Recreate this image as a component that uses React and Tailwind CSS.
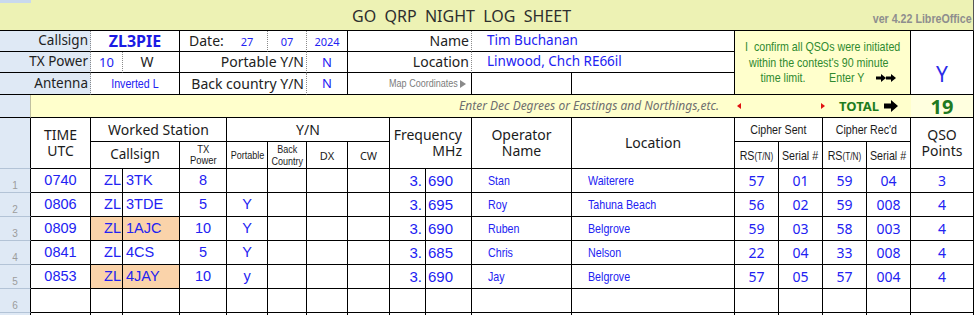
import React from "react";

const COLS =
  "grid grid-cols-[31px_60px_32px_57px_47px_41px_39px_41px_42px_36px_46px_100px_163px_44px_44px_44px_44px_63px]";
const T = "font-['Noto_Sans',sans-serif]";
const A = "font-['Liberation_Sans',Arial,sans-serif]";
const B = "border-r border-b border-r-black border-b-black";
const BD = "border-r border-b border-b-black border-r-[#8a8a8a] [border-right-style:dotted]";
const BLUE = "text-[#2222f2]";

function Nc({ children, className = "" }) {
  return (
    <span className={`inline-block whitespace-nowrap scale-x-[0.82] origin-center font-['Liberation_Sans',Arial,sans-serif] ${className}`}>
      {children}
    </span>
  );
}
function Nl({ children, className = "" }) {
  return (
    <span className={`inline-block whitespace-nowrap scale-x-[0.82] origin-left font-['Liberation_Sans',Arial,sans-serif] ${className}`}>
      {children}
    </span>
  );
}
function Nr({ children, className = "" }) {
  return (
    <span className={`inline-block whitespace-nowrap scale-x-[0.82] origin-right font-['Liberation_Sans',Arial,sans-serif] ${className}`}>
      {children}
    </span>
  );
}

const rows = [
  { n: "1", t: "0740", c: "3TK", w: "8", po: "", f1: "3.", f2: "690", op: "Stan", loc: "Waiterere", rs: "57", ss: "01", rr: "59", sr: "04", pts: "3", hl: false },
  { n: "2", t: "0806", c: "3TDE", w: "5", po: "Y", f1: "3.", f2: "695", op: "Roy", loc: "Tahuna Beach", rs: "56", ss: "02", rr: "59", sr: "008", pts: "4", hl: false },
  { n: "3", t: "0809", c: "1AJC", w: "10", po: "Y", f1: "3.", f2: "690", op: "Ruben", loc: "Belgrove", rs: "59", ss: "03", rr: "58", sr: "003", pts: "4", hl: true },
  { n: "4", t: "0841", c: "4CS", w: "5", po: "Y", f1: "3.", f2: "685", op: "Chris", loc: "Nelson", rs: "22", ss: "04", rr: "33", sr: "008", pts: "4", hl: false },
  { n: "5", t: "0853", c: "4JAY", w: "10", po: "y", f1: "3.", f2: "690", op: "Jay", loc: "Belgrove", rs: "57", ss: "05", rr: "57", sr: "004", pts: "4", hl: true },
  { n: "6", t: "", c: "", w: "", po: "", f1: "", f2: "", op: "", loc: "", rs: "", ss: "", rr: "", sr: "", pts: "", hl: false, zl: "" },
  { n: "", t: "", c: "", w: "", po: "", f1: "", f2: "", op: "", loc: "", rs: "", ss: "", rr: "", sr: "", pts: "", hl: false, zl: "" },
];

function Arrow({ className }) {
  return (
    <svg className={className} viewBox="0 0 14 12" width="14" height="12">
      <path d="M0 3.5 H7 V0 L14 6 L7 12 V8.5 H0 Z" fill="#000" />
    </svg>
  );
}

function SmallArrow() {
  return (
    <svg viewBox="0 0 10 8" width="10" height="8">
      <path d="M0 2.5 H5 V0 L10 4 L5 8 V5.5 H0 Z" fill="#000" />
    </svg>
  );
}

function DataRow({ r }) {
  const hl = r.hl ? "bg-[#fad3aa]" : "bg-white";
  const zl = r.zl === undefined ? "ZL" : r.zl;
  return (
    <div className={`${COLS} h-[24px]`}>
      <div className={`bg-[#dfe9f5] border-r border-b border-r-black border-b-[#b3c3d6] flex items-end justify-center pb-[1px] text-[10px] text-[#9c9c9c] ${A}`}>
        {r.n}
      </div>
      <div className={`${B} flex items-center justify-center text-[14.5px] ${A} ${BLUE}`}>{r.t}</div>
      <div className={`${B} ${hl} flex items-center justify-end pr-[1px] text-[14.5px] ${A} ${BLUE}`}>{zl}</div>
      <div className={`${B} ${hl} flex items-center pl-[3px] text-[14.5px] ${A} ${BLUE}`}>{r.c}</div>
      <div className={`${B} flex items-center justify-center text-[14.5px] ${A} ${BLUE}`}>{r.w}</div>
      <div className={`${B} flex items-center justify-center text-[14.5px] ${A} ${BLUE}`}>{r.po}</div>
      <div className={`${B}`} />
      <div className={`${B}`} />
      <div className={`${B}`} />
      <div className={`${B} flex items-center justify-end pr-[3px] text-[15px] ${A} ${BLUE}`}>{r.f1}</div>
      <div className={`${B} flex items-center pl-[2px] text-[15px] ${A} ${BLUE}`}>{r.f2}</div>
      <div className={`${B} flex items-center pl-[16px] text-[13px] ${BLUE}`}><Nl>{r.op}</Nl></div>
      <div className={`${B} flex items-center pl-[16px] text-[13px] ${BLUE}`}><Nl>{r.loc}</Nl></div>
      <div className={`${B} flex items-center justify-center text-[14px] ${T} ${BLUE}`}>{r.rs}</div>
      <div className={`${B} flex items-center justify-center text-[14px] ${T} ${BLUE}`}>{r.ss}</div>
      <div className={`${B} flex items-center justify-center text-[14px] ${T} ${BLUE}`}>{r.rr}</div>
      <div className={`${B} flex items-center justify-center text-[14px] ${T} ${BLUE}`}>{r.sr}</div>
      <div className={`${B} flex items-center justify-center text-[14px] ${T} ${BLUE}`}>{r.pts}</div>
    </div>
  );
}

export default function App() {
  return (
    <div className="w-[977px] h-[315px] overflow-hidden bg-white leading-none">
      {/* Title */}
      <div className="w-[974px] h-[31px] flex bg-[#edf2b4] border-r border-b border-r-[#555] border-b-black">
        <div className="w-[31px] h-[3px] bg-[#c9d9ee] shrink-0" />
        <div className={`pl-[321px] pt-[8px] text-[16px] text-[#2e2e2e] whitespace-pre ${T}`}>
          GO  QRP  NIGHT  LOG  SHEET
        </div>
        <div className="ml-auto pt-[12px] pr-[1px] text-[13px] font-bold text-[#8e8e8e]">
          <Nr>ver 4.22 LibreOffice</Nr>
        </div>
      </div>

      {/* Info section */}
      <div className={`${COLS} grid-rows-[21px_21px_22px]`}>
        {/* row 1 */}
        <div className={`col-start-1 col-span-2 row-start-1 bg-[#dfe9f5] ${BD} flex items-center justify-end pr-[2px] text-[13.5px] text-[#222] ${T}`}>Callsign</div>
        <div className={`col-start-3 col-span-2 row-start-1 ${B} flex items-center justify-center text-[16px] font-bold text-[#1b1be4] ${T}`}>ZL3PIE</div>
        <div className={`col-start-5 row-start-1 border-b border-b-black flex items-center pl-[9px] text-[14px] text-[#222] ${T}`}>Date:</div>
        <div className={`col-start-6 row-start-1 ${BD} flex items-center justify-center text-[11px] ${T} ${BLUE}`}>27</div>
        <div className={`col-start-7 row-start-1 ${BD} flex items-center justify-center text-[11px] ${T} ${BLUE}`}>07</div>
        <div className={`col-start-8 row-start-1 ${B} flex items-center justify-center text-[11px] ${T} ${BLUE}`}>2024</div>
        <div className={`col-start-9 col-span-3 row-start-1 ${BD} flex items-center justify-end pr-[2px] text-[14px] text-[#222] ${T}`}>Name</div>
        <div className={`col-start-12 col-span-2 row-start-1 ${B} flex items-center pl-[15px] text-[13.5px] ${T} ${BLUE}`}>Tim Buchanan</div>
        <div className="col-start-14 col-span-4 row-start-1 row-span-3 border-r border-b border-r-black border-b-black bg-[#ffffcc] flex flex-col items-center justify-center text-[13px] leading-[15.5px] text-[#2f8a2f]">
          <Nc className="whitespace-pre">I  confirm all QSOs were initiated</Nc>
          <Nc className="whitespace-pre pr-[8px]">within the contest's 90 minute</Nc>
          <div className="flex items-center">
            <Nc className="whitespace-pre">time limit.        Enter Y</Nc>
            <span className="flex">
              <SmallArrow />
              <SmallArrow />
            </span>
          </div>
        </div>
        <div className={`col-start-18 row-start-1 row-span-3 ${B} flex items-end justify-center pb-[9px] text-[21px] ${T} text-[#2b2be8]`}>Y</div>

        {/* row 2 */}
        <div className={`col-start-1 col-span-2 row-start-2 bg-[#dfe9f5] ${BD} flex items-center justify-end pr-[2px] text-[13.5px] text-[#222] ${T}`}>TX Power</div>
        <div className={`col-start-3 row-start-2 ${BD} flex items-center justify-center text-[13px] ${T} ${BLUE}`}>10</div>
        <div className={`col-start-4 row-start-2 ${B} flex items-center justify-center pr-[8px] text-[14px] text-[#222] ${T}`}>W</div>
        <div className={`col-start-5 col-span-3 row-start-2 ${BD} flex items-center justify-end pr-[2px] text-[14px] text-[#222] ${T}`}>Portable Y/N</div>
        <div className={`col-start-8 row-start-2 ${B} flex items-center justify-center text-[13px] ${T} ${BLUE}`}>N</div>
        <div className={`col-start-9 col-span-3 row-start-2 ${BD} flex items-center justify-end pr-[2px] text-[14px] text-[#222] ${T}`}>Location</div>
        <div className={`col-start-12 col-span-2 row-start-2 ${B} flex items-center pl-[15px] text-[13.5px] ${T} ${BLUE}`}>Linwood, Chch RE66il</div>

        {/* row 3 */}
        <div className={`col-start-1 col-span-2 row-start-3 bg-[#dfe9f5] ${BD} flex items-center justify-end pr-[2px] text-[13.5px] text-[#222] ${T}`}>Antenna</div>
        <div className={`col-start-3 col-span-2 row-start-3 ${B} flex items-center justify-center text-[13px] ${BLUE}`}><Nc>Inverted L</Nc></div>
        <div className={`col-start-5 col-span-3 row-start-3 ${BD} flex items-center justify-end pr-[2px] text-[14px] text-[#222] ${T}`}>Back country Y/N</div>
        <div className={`col-start-8 row-start-3 ${B} flex items-center justify-center text-[13px] ${T} ${BLUE}`}>N</div>
        <div className={`col-start-9 col-span-3 row-start-3 ${B} flex items-center justify-end gap-[2px] pr-[5px] text-[11px] text-[#7c7c7c]`}>
          <Nr>Map Coordinates</Nr>
          <svg viewBox="0 0 6 8" width="6" height="8"><path d="M0 0 L6 4 L0 8 Z" fill="#8a8a8a" /></svg>
        </div>
        <div className={`col-start-12 row-start-3 ${B}`} />
        <div className={`col-start-13 row-start-3 ${B}`} />
      </div>

      {/* Yellow row */}
      <div className={`${COLS} h-[23px]`}>
        <div className="bg-[#dfe9f5] border-r border-b border-r-[#c0c0a0] border-b-black" />
        <div className={`col-span-12 bg-[#ffffcc] border-b border-b-black flex items-center justify-end pr-[16px] text-[12px] italic text-[#6e6e6e] ${T}`}>
          Enter Dec Degrees or Eastings and Northings,etc.
        </div>
        <div className="col-span-4 bg-[#ffffcc] border-b border-b-black flex items-center">
          <svg className="ml-[2px]" viewBox="0 0 4 6" width="4" height="6"><path d="M4 0 L0 3 L4 6 Z" fill="#e01010" /></svg>
          <svg className="ml-[80px]" viewBox="0 0 4 6" width="4" height="6"><path d="M0 0 L4 3 L0 6 Z" fill="#e01010" /></svg>
          <span className={`ml-[14px] text-[13px] font-bold text-[#1d7d1d] ${T}`}>TOTAL</span>
          <Arrow className="ml-[5px]" />
        </div>
        <div className={`bg-[#ffffdf] border-r border-b border-r-black border-b-black flex items-center justify-center pt-[1px] text-[20px] font-bold text-[#217a21] ${T}`}>19</div>
      </div>

      {/* Header */}
      <div className={`${COLS} grid-rows-[24px_27px] text-[#1b1b1b]`}>
        <div className="col-start-1 row-start-1 row-span-2 bg-[#dfe9f5] border-r border-b border-r-black border-b-[#b3c3d6]" />
        <div className={`col-start-2 row-start-1 row-span-2 ${B} flex flex-col items-center justify-center leading-[16px] text-[14px] ${T}`}>
          <span>TIME</span>
          <span>UTC</span>
        </div>
        <div className={`col-start-3 col-span-3 row-start-1 ${B} flex items-center justify-center text-[14px] ${T}`}>Worked Station</div>
        <div className={`col-start-3 col-span-2 row-start-2 ${B} flex items-center justify-center text-[13.5px] ${T}`}>Callsign</div>
        <div className={`col-start-5 row-start-2 ${B} flex flex-col items-center justify-center leading-[11px] text-[11.5px]`}>
          <Nc>TX</Nc>
          <Nc>Power</Nc>
        </div>
        <div className={`col-start-6 col-span-4 row-start-1 ${B} flex items-center justify-center text-[14px] ${T}`}>Y/N</div>
        <div className={`col-start-6 row-start-2 ${B} flex items-center justify-center text-[11px]`}><Nc>Portable</Nc></div>
        <div className={`col-start-7 row-start-2 ${B} flex flex-col items-center justify-center leading-[12px] text-[11px]`}>
          <Nc>Back</Nc>
          <Nc>Country</Nc>
        </div>
        <div className={`col-start-8 row-start-2 ${B} flex items-center justify-center text-[11px] ${T}`}>DX</div>
        <div className={`col-start-9 row-start-2 ${B} flex items-center justify-center text-[11px] ${T}`}>CW</div>
        <div className={`col-start-10 col-span-2 row-start-1 row-span-2 ${B} flex flex-col items-end justify-center pr-[9px] leading-[16px] text-[14px] ${T}`}>
          <span>Frequency</span>
          <span>MHz</span>
        </div>
        <div className={`col-start-12 row-start-1 row-span-2 ${B} flex flex-col items-center justify-center leading-[16px] text-[14px] ${T}`}>
          <span>Operator</span>
          <span>Name</span>
        </div>
        <div className={`col-start-13 row-start-1 row-span-2 ${B} flex items-center justify-center text-[14px] ${T}`}>Location</div>
        <div className={`col-start-14 col-span-2 row-start-1 ${B} flex items-center justify-center text-[13px]`}><Nc>Cipher Sent</Nc></div>
        <div className={`col-start-16 col-span-2 row-start-1 ${B} flex items-center justify-center text-[13px]`}><Nc>Cipher Rec'd</Nc></div>
        <div className={`col-start-14 row-start-2 ${B} flex items-center justify-center text-[13px]`}>
          <Nc>RS<span className="text-[10px]">(T/N)</span></Nc>
        </div>
        <div className={`col-start-15 row-start-2 ${B} flex items-center justify-center text-[13px]`}><Nc>Serial #</Nc></div>
        <div className={`col-start-16 row-start-2 ${B} flex items-center justify-center text-[13px]`}>
          <Nc>RS<span className="text-[10px]">(T/N)</span></Nc>
        </div>
        <div className={`col-start-17 row-start-2 ${B} flex items-center justify-center text-[13px]`}><Nc>Serial #</Nc></div>
        <div className={`col-start-18 row-start-1 row-span-2 ${B} flex flex-col items-center justify-center leading-[16px] text-[14px] ${T}`}>
          <span>QSO</span>
          <span>Points</span>
        </div>
      </div>

      {rows.map((r, i) => (
        <DataRow key={i} r={r} />
      ))}
    </div>
  );
}
